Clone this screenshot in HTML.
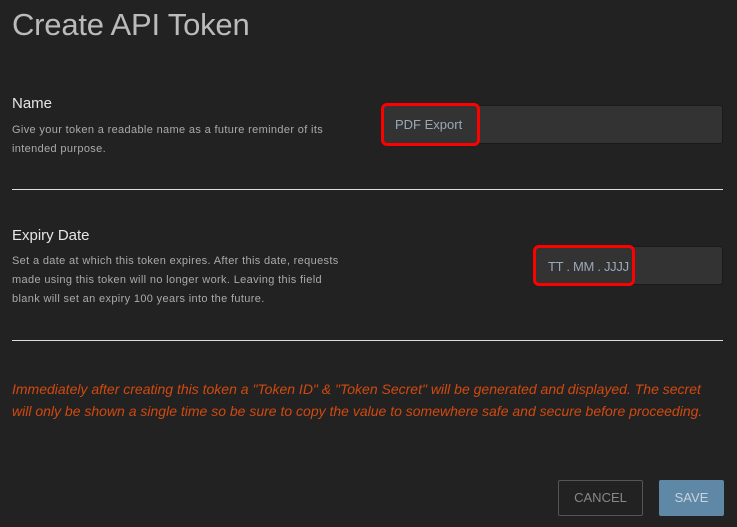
<!DOCTYPE html>
<html><head><meta charset="utf-8"><style>
*{margin:0;padding:0;box-sizing:border-box}
body{width:737px;height:527px;background:#222;font-family:"Liberation Sans",sans-serif;position:relative;overflow:hidden;color:#ccc}
.a{position:absolute;white-space:nowrap}
h1{position:absolute;left:12px;top:7px;font-size:31px;font-weight:normal;color:#bbb;letter-spacing:-0.2px}
.lbl{font-size:15px;color:#e6e6e6}
.desc{font-size:11px;color:#aaa;line-height:19px;letter-spacing:0.35px}
.inp{position:absolute;background:#333;border:1px solid #1a1a1a;border-radius:3px}
.red{position:absolute;border:3px solid #f00;border-radius:6px}
.hr{position:absolute;left:12px;width:711px;height:1px;background:#ddd}
.warn{position:absolute;left:12px;top:378px;font-size:14px;font-style:italic;color:#d2490f;line-height:22px;white-space:nowrap;letter-spacing:0px}
</style></head><body>
<h1>Create API Token</h1>
<div class="a lbl" style="left:12px;top:95px">Name</div>
<div class="a desc" style="left:12px;top:121px">Give your token a readable name as a future reminder of its<br>intended purpose.</div>
<div class="inp" style="left:382px;top:105px;width:341px;height:39px"></div>
<div class="red" style="left:381px;top:103px;width:99px;height:43px"></div>
<div class="a" style="left:395px;top:117px;font-size:13px;color:#9aa9b8">PDF Export</div>
<div class="hr" style="top:189px"></div>
<div class="a lbl" style="left:12px;top:227px">Expiry Date</div>
<div class="a desc" style="left:12px;top:252px">Set a date at which this token expires. After this date, requests<br>made using this token will no longer work. Leaving this field<br>blank will set an expiry 100 years into the future.</div>
<div class="inp" style="left:534px;top:246px;width:189px;height:39px"></div>
<div class="red" style="left:533px;top:245px;width:102px;height:41px"></div>
<div class="a" style="left:548px;top:259px;font-size:13px;color:#9aa9b8;letter-spacing:-0.3px">TT . MM . JJJJ</div>
<div class="hr" style="top:340px"></div>
<div class="warn">Immediately after creating this token a "Token ID" &amp; "Token Secret" will be generated and displayed. The secret<br>will only be shown a single time so be sure to copy the value to somewhere safe and secure before proceeding.</div>
<div class="a" style="left:558px;top:480px;width:85px;height:36px;border:1px solid #555;border-radius:2px;color:#888;font-size:13px;text-align:center;line-height:34px">CANCEL</div>
<div class="a" style="left:659px;top:480px;width:65px;height:36px;background:#5e88a6;border-radius:2px;color:#c8d4de;font-size:13px;text-align:center;line-height:36px">SAVE</div>
</body></html>
